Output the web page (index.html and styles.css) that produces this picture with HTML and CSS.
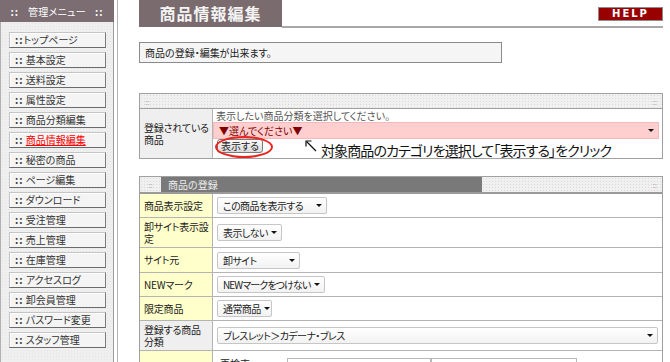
FILE: index.html
```html
<!DOCTYPE html>
<html lang="ja">
<head>
    <meta charset="UTF-8">
    <title>商品情報編集</title>
    <link rel="stylesheet" href="styles.css">
</head>
<body>
<div class="page">
    <aside class="sidebar">
        <div class="side-head"><span>::</span><span>管理メニュー</span><span>::</span></div>
        <ul class="side-menu">
            <li><a href="#"><b>::</b>トップページ</a></li>
            <li><a href="#"><b>::</b> 基本設定</a></li>
            <li><a href="#"><b>::</b> 送料設定</a></li>
            <li><a href="#"><b>::</b> 属性設定</a></li>
            <li><a href="#"><b>::</b> 商品分類編集</a></li>
            <li><a href="#" class="current"><b>::</b> <u>商品情報編集</u></a></li>
            <li><a href="#"><b>::</b> 秘密の商品</a></li>
            <li><a href="#"><b>::</b> ページ編集</a></li>
            <li><a href="#"><b>::</b> ダウンロード</a></li>
            <li><a href="#"><b>::</b> 受注管理</a></li>
            <li><a href="#"><b>::</b> 売上管理</a></li>
            <li><a href="#"><b>::</b> 在庫管理</a></li>
            <li><a href="#"><b>::</b> アクセスログ</a></li>
            <li><a href="#"><b>::</b> 卸会員管理</a></li>
            <li><a href="#"><b>::</b> パスワード変更</a></li>
            <li><a href="#"><b>::</b> スタッフ管理</a></li>
        </ul>
    </aside>

    <main class="main">
        <div class="title-row">
            <h1 class="title">商品情報編集</h1>
            <div class="title-rule"><span class="help">HELP</span></div>
        </div>

        <p class="notice">商品の登録・編集が出来ます。</p>

        <!-- 商品の検索 -->
        <div class="panel search">
            <div class="panel-head"><span>::</span><span>::</span></div>
            <div class="row row-search">
                <div class="label grey"><span>登録されている商品</span></div>
                <div class="value search-value">
                    <div class="hint">表示したい商品分類を選択してください。</div>
                    <div class="pink-select"><span>▼選んでください▼</span><i class="caret"></i></div>
                    <div class="action">
                        <span class="btn-wrap">
                            <span class="btn-show">表示する</span>
                            <span class="circle"></span>
                        </span>
                        <svg class="pointer" width="12" height="12" viewBox="0 0 12 12">
                            <path d="M11 11 L1.5 1.5" stroke="#111" stroke-width="1.2" fill="none"/>
                            <path d="M1 6.5 V1 H6.5" stroke="#111" stroke-width="1.2" fill="none"/>
                        </svg>
                        <span class="tip">対象商品のカテゴリを選択して「表示する」をクリック</span>
                    </div>
                </div>
            </div>
        </div>

        <!-- 商品の登録 -->
        <div class="panel register">
            <div class="reg-head">
                <span class="reg-dots">::</span>
                <span class="reg-title">商品の登録</span>
                <span class="reg-fill">::</span>
            </div>
            <div class="row h23">
                <div class="label yellow"><span>商品表示設定</span></div>
                <div class="value"><span class="select sel-display"><span>この商品を表示する</span><i class="caret"></i></span></div>
            </div>
            <div class="row h29">
                <div class="label yellow"><span>卸サイト表示設定</span></div>
                <div class="value"><span class="select sel-whole"><span>表示しない</span><i class="caret"></i></span></div>
            </div>
            <div class="row h24">
                <div class="label yellow"><span>サイト元</span></div>
                <div class="value"><span class="select sel-site"><span>卸サイト</span><i class="caret"></i></span></div>
            </div>
            <div class="row h23">
                <div class="label yellow"><span>NEWマーク</span></div>
                <div class="value"><span class="select sel-new"><span>NEWマークをつけない</span><i class="caret"></i></span></div>
            </div>
            <div class="row h23">
                <div class="label yellow"><span>限定商品</span></div>
                <div class="value"><span class="select sel-limit"><span>通常商品</span><i class="caret"></i></span></div>
            </div>
            <div class="row h29">
                <div class="label grey"><span>登録する商品<br>分類</span></div>
                <div class="value"><span class="select sel-cat"><span>ブレスレット＞カデーナ・ブレス</span><i class="caret"></i></span></div>
            </div>
            <div class="row h50">
                <div class="label yellow"><span>商品名</span></div>
                <div class="value top">
                    <span class="small-text">再検索</span>
                    <span class="input in-a"></span>
                    <span class="input in-b"></span>
                </div>
            </div>
        </div>
    </main>
</div>
</body>
</html>
```

FILE: styles.css
```css
html, body {
    margin: 0;
    padding: 0;
    background: #fff;
}
body {
    font-family: "Noto Sans CJK JP", "Noto Sans", sans-serif;
    font-size: 10px;
    color: #222;
    font-feature-settings: "palt";
}
.page {
    display: flex;
    width: 670px;
    height: 362px;
    overflow: hidden;
}

/* sidebar */
.sidebar {
    flex: none;
    width: 114px;
    padding-right: 3px;
    border-right: 1px solid #b4b4b4;
}
.side-head {
    height: 22px;
    background: #7b6d71;
    color: #fff;
    display: flex;
    justify-content: center;
    align-items: center;
    gap: 9px;
    letter-spacing: 0.3px;
}
.side-head span:first-child,
.side-head span:last-child {
    font-weight: bold;
    letter-spacing: 1px;
}
.side-menu {
    list-style: none;
    margin: 0;
    padding: 10px 0 0 8px;
    height: 340px;
    box-sizing: border-box;
    background-color: #efefef;
    background-image: radial-gradient(#e4e4e4 0.7px, transparent 0.9px);
    background-size: 3px 3px;
    border-left: 1px solid #b0b0b0;
    border-right: 1px solid #9c9c9c;
}
.side-menu li {
    margin-bottom: 4px;
}
.side-menu a {
    display: block;
    width: 97px;
    height: 16px;
    box-sizing: border-box;
    border: 1px solid;
    border-color: #c4c4c4 #7c7c7c #6a6a6a #c4c4c4;
    background: #f4f4f4;
    box-shadow: inset 1px 1px 0 #fff;
    padding-left: 5px;
    line-height: 14px;
    color: #333;
    text-decoration: none;
    white-space: nowrap;
}
.side-menu a b {
    color: #333;
    letter-spacing: 1px;
}
.side-menu a.current {
    color: #ff0000;
}

/* main */
.main {
    flex: none;
    width: 524px;
    margin-left: 21px;
}
.title-row {
    display: flex;
    height: 28px;
}
.title {
    margin: 0;
    width: 143px;
    height: 27px;
    background: #7a6b6e;
    color: #f4f4f4;
    font-size: 16px;
    font-weight: bold;
    text-align: center;
    line-height: 27px;
    letter-spacing: 1px;
    font-feature-settings: normal;
}
.title-rule {
    flex: 1;
    height: 28px;
    box-sizing: border-box;
    display: flex;
    justify-content: flex-end;
    align-items: flex-start;
    padding-top: 7px;
    border-bottom: 2px solid #a8a8a8;
}
.help {
    width: 65px;
    height: 14px;
    box-sizing: border-box;
    background: #990000;
    border: 1px solid #8c8c8c;
    color: #fff;
    font: bold 10px "DejaVu Sans", sans-serif;
    letter-spacing: 2px;
    text-align: center;
    line-height: 12px;
}
.notice {
    margin: 14px 0 0;
    width: 363px;
    height: 21px;
    box-sizing: border-box;
    border: 1px solid #8a8a8a;
    background: #f5f5f5;
    padding-left: 5px;
    line-height: 19px;
}

/* panels */
.panel {
    border: 1px solid #a0a0a0;
}
.panel.search {
    margin-top: 30px;
}
.panel.register {
    margin-top: 17px;
}
.panel-head {
    height: 14px;
    display: flex;
    justify-content: space-between;
    align-items: center;
    padding: 0 5px;
    background-color: #f0f0f0;
    background-image: radial-gradient(#dadada 0.7px, transparent 0.9px);
    background-size: 3px 3px;
    border-bottom: 1px solid #a0a0a0;
    color: #aaa;
    font-size: 8px;
}
.row {
    display: grid;
    grid-template-columns: 73px 1fr;
    border-top: 1px solid #b4b4b4;
}
.panel-head + .row,
.reg-head + .row {
    border-top: none;
}
.label {
    box-sizing: border-box;
    border-right: 1px solid #b4b4b4;
    padding: 0 0 0 4px;
    display: flex;
    align-items: center;
    line-height: 12px;
    letter-spacing: -0.2px;
}
.label.yellow {
    background: #ffffcc;
}
.label.grey {
    background: #efefef;
}
.value {
    display: flex;
    align-items: center;
    padding-left: 4px;
}
.value.top {
    align-items: flex-start;
    padding-top: 4px;
}
.h23 { height: 23px; }
.h24 { height: 24px; }
.h29 { height: 29px; }
.h50 { height: 50px; }

/* search row */
.row-search {
    height: 49px;
}
.search-value {
    display: block;
    padding: 1px 0 0 0;
}
.hint {
    height: 12px;
    line-height: 12px;
    padding-left: 3px;
    color: #555;
}
.pink-select {
    width: 446px;
    height: 17px;
    box-sizing: border-box;
    background: #ffcfcf;
    border: 1px solid #f2baba;
    display: flex;
    justify-content: space-between;
    align-items: center;
    padding: 0 4px 0 5px;
    color: #800000;
}
.action {
    height: 19px;
    display: flex;
    align-items: flex-start;
    padding-left: 4px;
}
.btn-wrap {
    position: relative;
}
.btn-show {
    display: block;
    width: 46px;
    height: 14px;
    box-sizing: border-box;
    border: 1px solid #7a7a7a;
    border-radius: 3px;
    background: linear-gradient(#fafafa, #dadada);
    text-align: center;
    line-height: 12px;
}
.circle {
    position: absolute;
    left: -2px;
    top: -3px;
    width: 58px;
    height: 22px;
    box-sizing: border-box;
    border: 2px solid #e8251f;
    border-radius: 50%;
}
.pointer {
    margin: 1px 0 0 42px;
}
.tip {
    margin: 2px 0 0 4px;
    font-size: 14px;
    letter-spacing: -0.9px;
    line-height: 19px;
    color: #111;
    white-space: nowrap;
}

/* register head */
.reg-head {
    display: flex;
    height: 15px;
    border-bottom: 2px solid #9a9a9a;
    background-color: #f0f0f0;
    background-image: radial-gradient(#dadada 0.7px, transparent 0.9px);
    background-size: 3px 3px;
    color: #aaa;
    font-size: 8px;
    line-height: 15px;
}
.reg-dots {
    width: 21px;
    text-align: center;
}
.reg-title {
    width: 321px;
    box-sizing: border-box;
    padding-left: 7px;
    background: #797979;
    color: #eee;
    font-size: 10px;
}
.reg-fill {
    flex: 1;
    text-align: right;
    padding-right: 5px;
}

/* select boxes */
.select {
    height: 17px;
    box-sizing: border-box;
    border: 1px solid #c6c6c6;
    border-radius: 2px;
    background: linear-gradient(#fff, #f2f2f2);
    display: flex;
    align-items: center;
    justify-content: space-between;
    padding: 0 4px 0 5px;
    white-space: nowrap;
    letter-spacing: -0.6px;
}
.caret {
    flex: none;
    width: 0;
    height: 0;
    margin-left: 3px;
    border-left: 3px solid transparent;
    border-right: 3px solid transparent;
    border-top: 3px solid #111;
}
.sel-display { width: 110px; }
.sel-whole { width: 65px; }
.sel-site { width: 83px; }
.sel-new { width: 108px; letter-spacing: -0.9px; }
.sel-limit { width: 55px; }
.sel-cat { width: 441px; }

.small-text {
    margin: 1px 0 0 3px;
    width: 67px;
}
.input {
    display: block;
    height: 14px;
    margin-top: 3px;
    border: 1px solid #b8b8b8;
    border-bottom: none;
    background: #fff;
}
.in-a { width: 142px; }
.in-b { width: 144px; }
```
